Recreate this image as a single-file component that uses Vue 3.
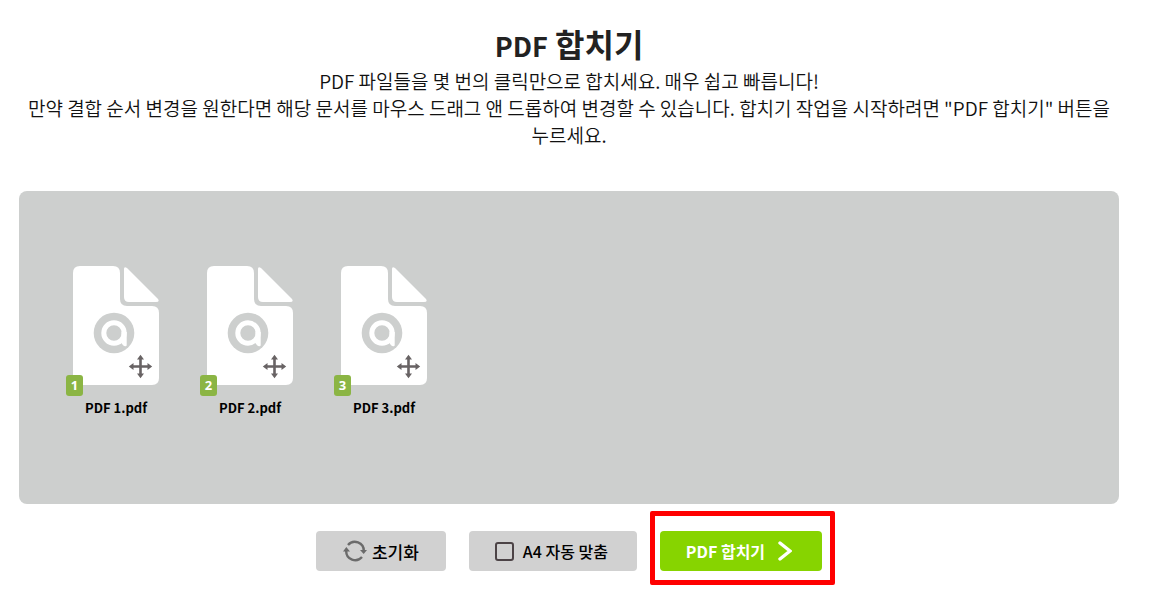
<script setup>
import { ref } from 'vue'

const initialFiles = ['PDF 1.pdf', 'PDF 2.pdf', 'PDF 3.pdf']
const files = ref([...initialFiles])
const fitA4 = ref(false)

function reset() {
  files.value = [...initialFiles]
  fitA4.value = false
}
</script>

<template>
  <main class="page">
    <header class="intro">
      <h1><span class="latin">PDF</span> 합치기</h1>
      <p>PDF 파일들을 몇 번의 클릭만으로 합치세요. 매우 쉽고 빠릅니다!</p>
      <p>만약 결합 순서 변경을 원한다면 해당 문서를 마우스 드래그 앤 드롭하여 변경할 수 있습니다. 합치기 작업을 시작하려면 "PDF 합치기" 버튼을 누르세요.</p>
    </header>

    <ol class="files">
      <li v-for="(name, i) in files" :key="name" class="file">
        <svg class="document" viewBox="0 0 86 119" aria-hidden="true">
          <path fill="#fff" d="M7 0H40Q47 0 47 7V33Q47 40 54 40H79Q86 40 86 47V112Q86 119 79 119H7Q0 119 0 112V7Q0 0 7 0Z" />
          <path fill="#fff" d="M51 3Q51 0 54 2L85 33Q87 36 83 36H56Q51 36 51 31Z" />
          <circle cx="41" cy="67" r="20.3" fill="#cdcfce" />
          <circle cx="41" cy="67" r="10.2" fill="none" stroke="#fff" stroke-width="5" />
          <path fill="#fff" d="M48.500 66H53.700V79Q53.700 80.500 52 80.200Q49 79.500 48.500 76Z" />
          <g transform="translate(67.500 100.500)" fill="#686364">
            <path d="M-1.300-8H1.300V-1.300H8V1.300H1.300V8H-1.300V1.300H-8V-1.300H-1.300Z" />
            <path d="M0-11.700L3.500-7H-3.500ZM0 11.700L3.500 7H-3.500ZM-11.700 0L-7-3.500V3.500ZM11.700 0L7-3.500V3.500Z" />
          </g>
        </svg>
        <span class="badge">{{ i + 1 }}</span>
        <span class="name">{{ name }}</span>
      </li>
    </ol>

    <div class="actions">
      <button class="action reset" type="button" @click="reset">
        <svg class="refresh" viewBox="0 0 24 22" aria-hidden="true">
          <path d="M5 5A9 9 0 0 1 20.800 11M19 17A9 9 0 0 1 3.200 11" fill="none" stroke="#6b6b6b" stroke-width="2.400" />
          <path d="M17 10H24L20.700 14ZM0 11.500L3.300 7L7 11.500Z" fill="#6b6b6b" />
        </svg>
        초기화
      </button>
      <label class="action fit">
        <input v-model="fitA4" type="checkbox" />
        A4 자동 맞춤
      </label>
      <div class="merge-wrap">
        <button class="action merge" type="button">
          PDF 합치기
          <svg class="chevron" viewBox="0 0 14 20" aria-hidden="true">
            <path d="M2 2L12 10L2 18" fill="none" stroke="#fff" stroke-width="3.400" stroke-linecap="round" />
          </svg>
        </button>
      </div>
    </div>
  </main>
</template>

<style>
body {
  background: #fff;
}
</style>

<style scoped>
.page {
  padding: 21px 54px 19px 19px;
  color: #222;
  font-family: "Noto Sans CJK KR", sans-serif;
}
.intro {
  text-align: center;
}
h1 {
  margin: 0 0 2px;
  font-size: 32px;
  line-height: 44px;
  font-weight: 700;
}
.latin {
  font-size: 27px;
  line-height: 1;
}
p {
  margin: 0;
  color: #111;
  font-size: 19px;
  line-height: 27px;
  font-weight: 350;
}
.files {
  display: flex;
  flex-wrap: wrap;
  gap: 48px;
  min-height: 188px;
  margin: 43px 0 0;
  padding: 75px 54px 50px;
  list-style: none;
  background: #cdcfce;
  border-radius: 8px;
}
.file {
  position: relative;
  width: 86px;
  cursor: move;
}
.document {
  display: block;
  width: 86px;
  height: 119px;
}
.badge {
  position: absolute;
  top: 109px;
  left: -7px;
  width: 17px;
  border-radius: 3px;
  background: #8bb544;
  color: #fff;
  font: 700 13px/21px "Noto Sans", sans-serif;
  text-align: center;
}
.name {
  display: block;
  margin-top: 12px;
  color: #000;
  font-size: 13px;
  line-height: 21px;
  font-weight: 700;
  text-align: center;
}
.actions {
  display: flex;
  justify-content: center;
  gap: 23px;
  margin-top: 27px;
}
.action {
  display: flex;
  align-items: center;
  height: 40px;
  box-sizing: border-box;
  padding: 0 26px;
  border: 0;
  border-radius: 4px;
  background: #d1d1d1;
  color: #000;
  font-family: inherit;
  font-size: 16px;
  font-weight: 500;
  white-space: nowrap;
  cursor: pointer;
}
.reset {
  gap: 5px;
  padding: 0 27px;
  font-size: 17px;
}
.fit {
  gap: 9px;
  min-width: 168px;
}
.refresh {
  width: 24px;
  height: 22px;
}
.fit input {
  appearance: none;
  width: 19px;
  height: 19px;
  margin: 0;
  border: 2px solid #4c4346;
  border-radius: 3px;
}
.fit input:checked {
  background: #4c4346;
}
.merge-wrap {
  position: relative;
}
.merge-wrap::after {
  content: "";
  position: absolute;
  inset: -20px -13px -14px -10px;
  border: 5px solid #f00;
  border-radius: 2px;
  pointer-events: none;
}
.merge {
  gap: 13px;
  padding-right: 30px;
  background: #87d400;
  color: #fff;
  font-weight: 700;
}
.chevron {
  width: 14px;
  height: 20px;
}
</style>
